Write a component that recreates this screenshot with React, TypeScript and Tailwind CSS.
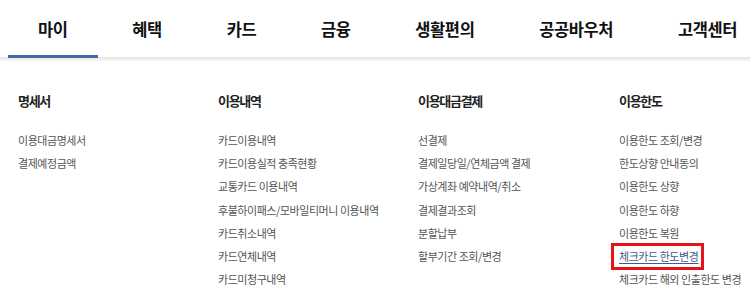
import React from 'react';

const tabs = ['마이', '혜택', '카드', '금융', '생활편의', '공공바우처', '고객센터'];

type Item = { label: string; highlight?: boolean };
type Column = { title: string; items: Item[] };

const columns: Column[] = [
    { title: '명세서', items: [{ label: '이용대금명세서' }, { label: '결제예정금액' }] },
    {
        title: '이용내역',
        items: [
            { label: '카드이용내역' },
            { label: '카드이용실적 충족현황' },
            { label: '교통카드 이용내역' },
            { label: '후불하이패스/모바일티머니 이용내역' },
            { label: '카드취소내역' },
            { label: '카드연체내역' },
            { label: '카드미청구내역' },
        ],
    },
    {
        title: '이용대금결제',
        items: [
            { label: '선결제' },
            { label: '결제일당일/연체금액 결제' },
            { label: '가상계좌 예약내역/취소' },
            { label: '결제결과조회' },
            { label: '분할납부' },
            { label: '할부기간 조회/변경' },
        ],
    },
    {
        title: '이용한도',
        items: [
            { label: '이용한도 조회/변경' },
            { label: '한도상향 안내동의' },
            { label: '이용한도 상향' },
            { label: '이용한도 하향' },
            { label: '이용한도 복원' },
            { label: '체크카드 한도변경', highlight: true },
            { label: '체크카드 해외 인출한도 변경' },
        ],
    },
];

export default function App() {
    return (
        <div
            className="w-[750px] h-[297px] bg-white overflow-hidden"
            style={{ fontFamily: '"Noto Sans CJK KR", "Noto Sans", sans-serif' }}
        >
            {/* Top tabs */}
            <div className="h-[57px] flex justify-between items-center pl-[38px] pr-[13px] pt-[2px]">
                {tabs.map((tab, i) => (
                    <div
                        key={tab}
                        className="relative h-full flex items-center text-[16.5px] font-bold tracking-[-0.4px] text-[#111]"
                    >
                        {tab}
                        {i === 0 && (
                            <span className="absolute -left-[30px] -right-[30px] -bottom-[1px] h-[3px] bg-[#4a68a8]" />
                        )}
                    </div>
                ))}
            </div>
            <div className="h-[5px] bg-gradient-to-b from-[#e2e2e2] to-white" />

            {/* Menu columns */}
            <div className="grid grid-cols-[200px_200px_201px_149px] pl-[18px] pt-[29px]">
                {columns.map((col) => (
                    <div key={col.title} className="flex flex-col">
                        <div className="text-[13px] leading-[20px] font-bold tracking-[-1.3px] text-[#222]">
                            {col.title}
                        </div>
                        <ul className="mt-[18px] flex flex-col">
                            {col.items.map((item) => (
                                <li
                                    key={item.label}
                                    className="text-[11px] leading-[23.2px] tracking-[-0.45px] text-[#555] whitespace-nowrap"
                                >
                                    {item.highlight ? (
                                        <span className="relative inline-block text-[#3f5a8e] underline underline-offset-[2px]">
                                            {item.label}
                                            <span className="absolute -left-[8px] -right-[6px] -top-[2px] -bottom-[2px] border-[3px] border-[#e8141b]" />
                                        </span>
                                    ) : (
                                        item.label
                                    )}
                                </li>
                            ))}
                        </ul>
                    </div>
                ))}
            </div>
        </div>
    );
}
